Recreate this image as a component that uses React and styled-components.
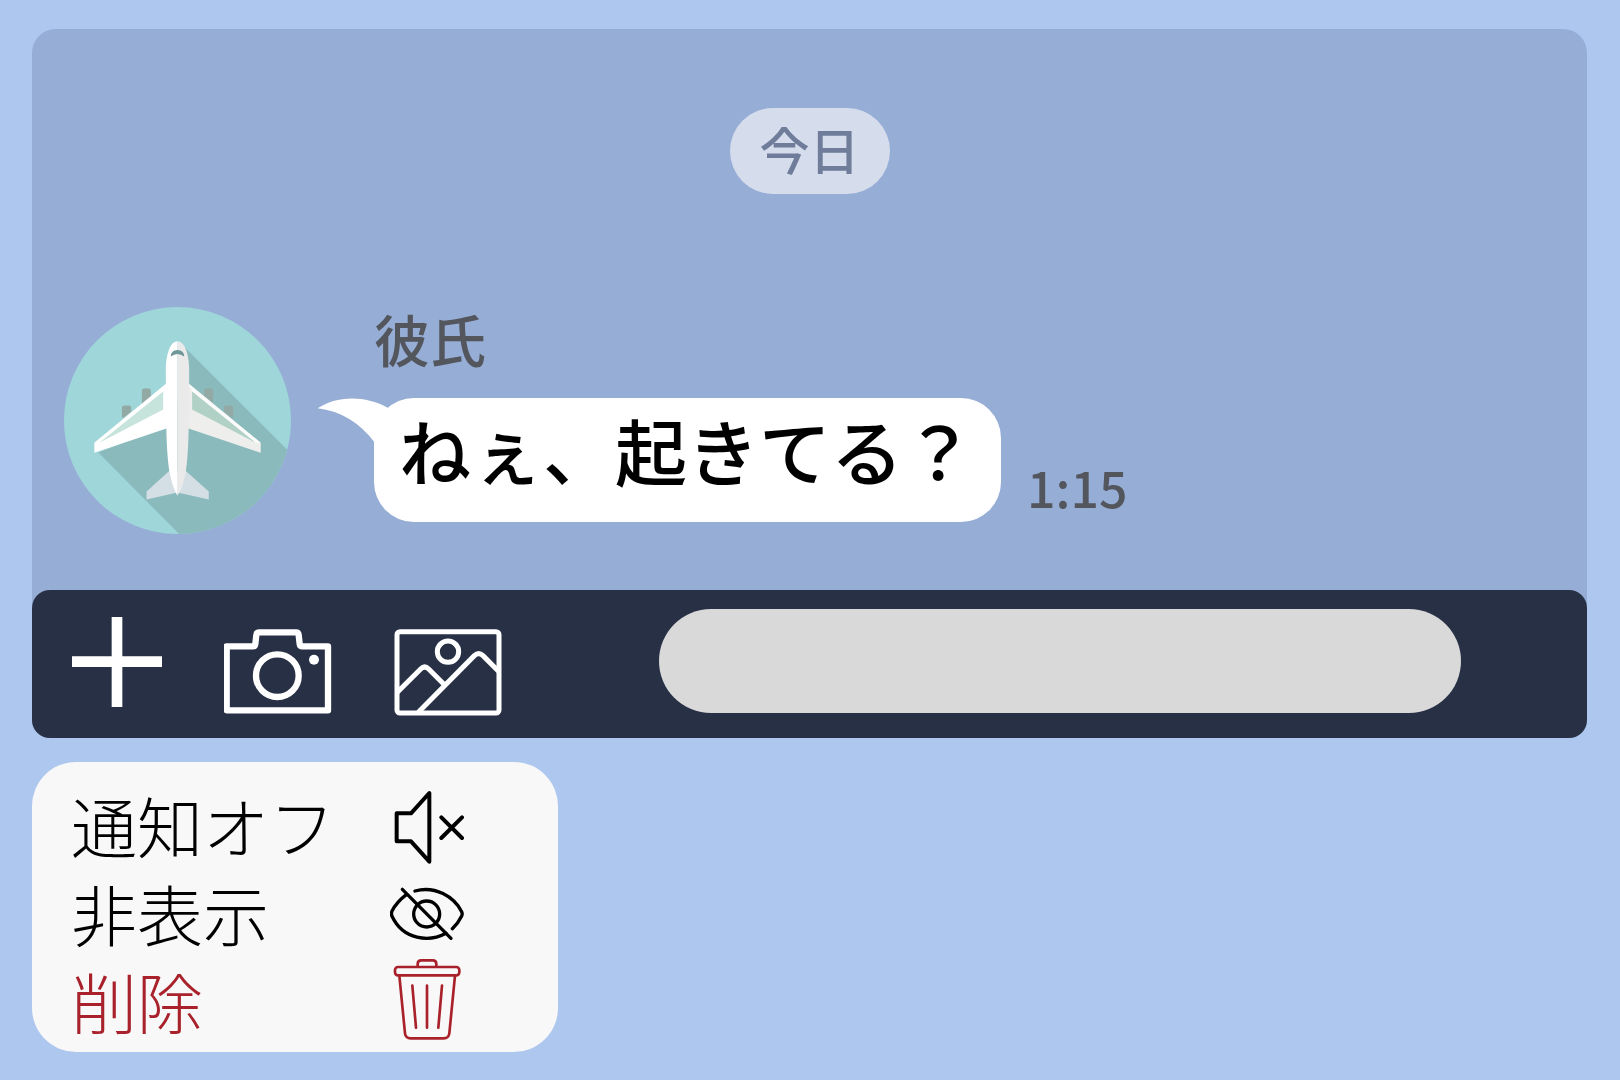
import React from 'react'
import styled, {createGlobalStyle} from "styled-components"


const GlobalStyle = createGlobalStyle`
  body{
    margin:0;
    background-color:#aec7ef;
    font-family:"Noto Sans CJK JP",sans-serif;
  }
  *{
    box-sizing:border-box;
  }
`

const Avatar = () => (
  <AvatarPic viewBox="42 52 682 682" role="img" aria-label="飛行機">
    <defs>
      <clipPath id="circle"><circle cx="383" cy="393" r="341"/></clipPath>
    </defs>
    <circle cx="383" cy="393" r="341" fill="#9fd6da"/>
    <path d="M404 172 L724 492 V734 H388 L145 489 L349 410 L400 300Z" fill="#8bbabc" clipPath="url(#circle)"/>
    <g fill="#93a9a3">
      <path d="M276 345 V304 Q276 297 283 297 H296 Q303 297 303 304 V330 L276 350Z"/>
      <path d="M216 384 V355 Q216 348 223 348 H237 Q244 348 244 355 V366 L222 384Z"/>
      <path d="M490 345 V304 Q490 297 483 297 H470 Q463 297 463 304 V318 L490 340Z"/>
      <path d="M550 384 V355 Q550 348 543 348 H530 Q523 348 523 355 V366 L545 384Z"/>
    </g>
    <path d="M358 545 L290 606 V630 L383 609 L477 630 V606 L408 545Z" fill="#d3dfe5"/>
    <path d="M350 281 L133 460 V490 L352 416Z" fill="#fff"/>
    <path d="M415 281 L633 460 V490 L414 416Z" fill="#eeeeed"/>
    <path d="M415 281 L633 460 L616 460 L427 306Z" fill="#fbfbfb"/>
    <path d="M340 306 L148 460 L340 360Z" fill="#c6e3dc"/>
    <path d="M427 306 L618 460 L427 360Z" fill="#b1d1c6"/>
    <path d="M383 155 C360 155 348 197 348 245 C348 390 349 500 361 557 Q370 600 383 619Z" fill="#fff"/>
    <path d="M383 155 C406 155 418 197 418 245 C418 390 417 500 406 557 Q397 600 383 619Z" fill="#ebeaea"/>
    <path d="M363 201 Q363 181 383 181 Q403 181 403 201 Q383 185 363 201Z" fill="#6f9799"/>
  </AvatarPic>
)

const PlusIcon = () => (
  <svg width="90" height="107" viewBox="156 89 270 321" aria-hidden="true">
    <path d="M291 113 V383 M156 247 H426" stroke="#fff" strokeWidth="32"/>
  </svg>
)

const CameraIcon = () => (
  <svg width="108" height="107" viewBox="611 89 324 321" fill="none" stroke="#fff" strokeWidth="19" strokeLinejoin="round" aria-hidden="true">
    <path d="M619 201 H698 Q704 201 705 194 L708 167 Q709 159 716 159 H827 Q834 159 835 167 L838 194 Q839 201 846 201 H923 V393 H619Z"/>
    <circle cx="771" cy="289" r="64"/>
    <circle cx="881" cy="241" r="15" fill="#fff" stroke="none"/>
  </svg>
)

const PictureIcon = () => (
  <svg width="108" height="107" viewBox="1123 89 324 321" fill="none" stroke="#fff" strokeWidth="15" aria-hidden="true">
    <rect x="1132" y="157" width="306" height="244" rx="9"/>
    <circle cx="1285" cy="217" r="32"/>
    <path d="M1133 339 L1203 269 Q1215 257 1227 269 L1275 317"/>
    <path d="M1196 399 L1364 229 Q1377 217 1390 229 L1438 277"/>
  </svg>
)

const MuteIcon = () => (
  <MenuIcon viewBox="30 12 222 264">
    <path d="M50 103 H93 L148 42 V248 L93 187 H50Z"/>
    <path d="M184 115 L246 177 M246 115 L184 177"/>
  </MenuIcon>
)

const HiddenIcon = () => (
  <MenuIcon viewBox="30 276 222 264" $stroke="10px">
    <circle cx="140" cy="405" r="39"/>
    <path d="M67 331 L213 478"/>
    <path d="M79 347 Q50 369 36 396 Q33 404 36 412 C70 484 148 490 198 463"/>
    <path d="M105 336 C165 319 222 353 245 398 Q248 404 245 411 Q235 432 217 449"/>
  </MenuIcon>
)

const TrashIcon = () => (
  <MenuIcon viewBox="30 539 222 264" $stroke="8px">
    <rect x="45" y="563" width="193" height="25" rx="9"/>
    <path d="M113 562 V554 Q113 543 124 543 H158 Q169 543 169 554 V562"/>
    <path d="M58 589 L75 762 Q77 777 92 777 H191 Q206 777 208 762 L225 589"/>
    <path d="M97 619 L108 745 M141 619 V745 M186 619 L175 745"/>
  </MenuIcon>
)

const Message = props => {

  return (
    <MessageRow>
      <Avatar/>
      <Body>
        <Name>{props.name}</Name>
        <BubbleRow>
          <Bubble>
            <Tail viewBox="50 323 222 135" aria-hidden="true">
              <path d="M52 354 C105 318 190 311 268 355 L272 458 H224 Q155 366 52 354Z" fill="#fff"/>
            </Tail>
            {props.text}
          </Bubble>
          <Time>{props.time}</Time>
        </BubbleRow>
      </Body>
    </MessageRow>
  )
}

const App = () => {

  return (
    <Page>
      <GlobalStyle/>
      <Chat>
        <DateLabel>今日</DateLabel>
        <Message name="彼氏" text="ねぇ、起きてる？" time="1:15"/>
        <InputBar>
          <ToolButton type="button" aria-label="追加"><PlusIcon/></ToolButton>
          <ToolButton type="button" aria-label="カメラ"><CameraIcon/></ToolButton>
          <ToolButton type="button" aria-label="写真"><PictureIcon/></ToolButton>
          <TextBox type="text" aria-label="メッセージ"/>
        </InputBar>
      </Chat>
      <Menu>
        <li><MenuButton type="button"><Label>通知オフ</Label><MuteIcon/></MenuButton></li>
        <li><MenuButton type="button"><Label>非表示</Label><HiddenIcon/></MenuButton></li>
        <li><MenuButton type="button" $danger><Label>削除</Label><TrashIcon/></MenuButton></li>
      </Menu>
    </Page>
  )
}

const Page = styled.div`
  min-height:100vh;
  display:flex;
  flex-direction:column;
  align-items:flex-start;
  gap:24px;
  padding:29px 33px 24px 32px;
`
const Chat = styled.main`
  width:100%;
  display:flex;
  flex-direction:column;
  background-color:#96add6;
  border-radius:24px 24px 18px 18px;
`
const DateLabel = styled.div`
  align-self:center;
  margin-top:79px;
  padding:0 30px 6px;
  border-radius:43px;
  background-color:#d5dcec;
  color:#6f7d9b;
  font-size:50px;
  font-weight:500;
  line-height:80px;
`
const MessageRow = styled.div`
  display:flex;
  align-items:flex-start;
  gap:83px;
  padding:113px 32px 56px;
`
const AvatarPic = styled.svg`
  width:227px;
  height:227px;
  flex-shrink:0;
`
const Body = styled.div`
  display:flex;
  flex-direction:column;
  gap:30px;
`
const Name = styled.div`
  color:#53565c;
  font-size:56px;
  font-weight:500;
  line-height:61px;
`
const BubbleRow = styled.div`
  display:flex;
  align-items:flex-end;
  gap:26px;
`
const Bubble = styled.p`
  position:relative;
  margin:0;
  padding:0 26px 22px 25px;
  border-radius:40px;
  background-color:#fff;
  color:#000;
  font-size:72px;
  font-weight:500;
  line-height:102px;
`
const Tail = styled.svg`
  position:absolute;
  top:0;
  left:-57px;
  width:74px;
  height:45px;
`
const Time = styled.time`
  color:#53565c;
  font-size:50px;
  font-weight:500;
  line-height:72px;
`
const InputBar = styled.form`
  display:flex;
  align-items:flex-start;
  gap:62px;
  padding:19px 126px 22px 40px;
  border-radius:18px;
  background-color:#283045;
`
const ToolButton = styled.button`
  display:flex;
  flex-shrink:0;
  padding:0;
  border:none;
  background:none;
  cursor:pointer;
`
const TextBox = styled.input`
  flex:1;
  min-width:0;
  height:104px;
  margin-left:95px;
  padding:0 48px;
  border:none;
  border-radius:52px;
  background-color:#d9d9d9;
  font-family:inherit;
  font-size:50px;
`
const Menu = styled.ul`
  width:526px;
  max-width:100%;
  margin:0;
  padding:21px 94px 5px 39px;
  border-radius:44px;
  background-color:#f8f8f8;
  list-style:none;
`
const MenuButton = styled.button`
  width:100%;
  display:flex;
  align-items:center;
  justify-content:space-between;
  padding:0;
  border:none;
  background:none;
  color:${props => props.$danger ? "#a9222b" : "#000"};
  font-family:inherit;
  font-size:66px;
  font-weight:300;
  line-height:80px;
  cursor:pointer;
`
const Label = styled.span`
  padding-bottom:6px;
`
const MenuIcon = styled.svg.attrs({"aria-hidden": true})`
  width:74px;
  height:88px;
  fill:none;
  stroke:currentColor;
  stroke-width:${props => props.$stroke || "12px"};
  stroke-linecap:round;
  stroke-linejoin:round;
`


export default App
